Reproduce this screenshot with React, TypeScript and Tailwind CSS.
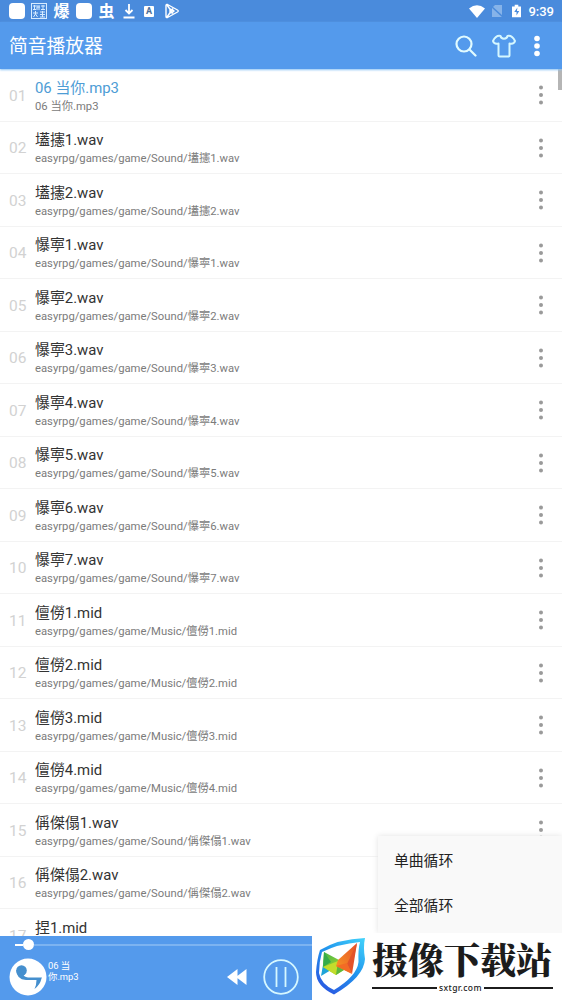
import type { ReactNode } from "react";

const tracks = [
  { title: "06 当你.mp3", path: "06 当你.mp3" },
  { title: "壒攇1.wav", folder: "Sound" },
  { title: "壒攇2.wav", folder: "Sound" },
  { title: "懪寕1.wav", folder: "Sound" },
  { title: "懪寕2.wav", folder: "Sound" },
  { title: "懪寕3.wav", folder: "Sound" },
  { title: "懪寕4.wav", folder: "Sound" },
  { title: "懪寕5.wav", folder: "Sound" },
  { title: "懪寕6.wav", folder: "Sound" },
  { title: "懪寕7.wav", folder: "Sound" },
  { title: "儃僗1.mid", folder: "Music" },
  { title: "儃僗2.mid", folder: "Music" },
  { title: "儃僗3.mid", folder: "Music" },
  { title: "儃僗4.mid", folder: "Music" },
  { title: "偁傑傝1.wav", folder: "Sound" },
  { title: "偁傑傝2.wav", folder: "Sound" },
  { title: "捏1.mid", path: "" },
];

function Dots({ className, r = 2 }: { className: string; r?: number }) {
  return (
    <svg viewBox="0 0 6 22" className={className} fill="currentColor">
      <circle cx="3" cy="3.5" r={r} />
      <circle cx="3" cy="11" r={r} />
      <circle cx="3" cy="18.5" r={r} />
    </svg>
  );
}

function StatusGlyph({ children }: { children: ReactNode }) {
  return <span className="w-[17px] text-center text-[16px] leading-[17px] font-bold">{children}</span>;
}

function StatusBar() {
  return (
    <div className="flex h-[22px] shrink-0 items-center bg-[#4a8bdc] pr-2 pl-[9px] text-white">
      <div className="flex items-center gap-[6px]">
        <span className="h-4 w-4 rounded-[4px] bg-white" />
        <svg viewBox="0 0 16 16" className="h-4 w-4" fill="none" stroke="#d6ebff" strokeWidth="1">
          <rect x="0.5" y="0.5" width="15" height="15" />
          <path d="M2 3h3M3.5 2v5M2 6.5h3M6 2v5M6 4h3M8 2v5M10 3h4M12 2v5M10 6.5h4M2 10h5M4.5 8v3l-2 3M4.5 11l2 3M9 9h5M9 11.5h5M11.5 8v6M9 14h5" />
        </svg>
        <StatusGlyph>爆</StatusGlyph>
        <span className="h-4 w-4 rounded-[4px] bg-white" />
        <StatusGlyph>虫</StatusGlyph>
        <svg viewBox="0 0 14 16" className="ml-[1px] h-4 w-[14px]" fill="none" stroke="white" strokeWidth="1.8">
          <path d="M7 1v9M3.5 7 7 10.5 10.5 7M1.5 14.5h11" />
        </svg>
        <span className="ml-[2px] flex h-[11px] w-[10px] items-center justify-center rounded-[1px] bg-white text-[9px] leading-none font-bold text-[#4a6d96]">
          A
        </span>
        <svg viewBox="0 0 16 16" className="ml-[4px] h-4 w-4" fill="none" stroke="white" strokeWidth="1.4" strokeLinejoin="round">
          <path d="M2 2.5Q2 1 3.5 1.5L13.5 7Q15 8 13.5 9L3.5 14.5Q2 15 2 13.5ZM3 2l6 8.5M3 14l6-8.5M6 6v4l4-2Z" />
        </svg>
      </div>
      <div className="ml-auto flex items-center">
        <svg viewBox="0 0 16 13" className="h-[13px] w-4" fill="white">
          <path d="M0 3.5Q8-3 16 3.5L8 13Z" />
        </svg>
        <svg viewBox="0 0 12 12" className="ml-[6px] h-3 w-3">
          <path d="M4 0h7v12H1V3Z" fill="#86b3e9" />
          <path d="M0 1 12 12" stroke="#4a8bdc" strokeWidth="1.5" />
        </svg>
        <svg viewBox="0 0 10 14" className="ml-[9px] h-[14px] w-[9px]">
          <path d="M3 0h4v2h3v12H0V2h3Z" fill="white" />
          <path d="M6 3 2.5 8H5v4l3-5H5.5Z" fill="#4a8bdc" />
        </svg>
        <span className="ml-[7px] pt-px text-[13px] leading-4 font-medium">9:39</span>
      </div>
    </div>
  );
}

function TitleBar() {
  return (
    <div className="z-10 flex h-[47px] shrink-0 items-center bg-[#549aec] pr-[22px] pl-[9px] text-white shadow-[0_1px_2px_#8bc4f5]">
      <h1 className="pt-[2px] text-[18.8px] leading-6">简音播放器</h1>
      <svg viewBox="0 0 22 22" className="ml-auto h-[22px] w-[22px]" fill="none" stroke="#e1fbff" strokeWidth="2.2" strokeLinecap="round">
        <circle cx="9" cy="9" r="7.5" />
        <path d="m14.5 14.5 6 6" />
      </svg>
      <svg viewBox="0 0 24 24" className="mr-[18px] ml-[15px] h-6 w-6" fill="none" stroke="#d5f7ff" strokeWidth="2" strokeLinejoin="round">
        <path d="M8.5 2C9 5.5 15 5.5 15.5 2Q20 1 23 7 22 10.5 17.5 9.5V21.5Q17.5 22.5 16.5 22.5H7.5Q6.5 22.5 6.5 21.5V9.5Q2 10.5 1 7 4 1 8.5 2Z" />
      </svg>
      <Dots r={2.8} className="h-[22px] w-[6px]" />
    </div>
  );
}

function TrackList() {
  return (
    <ul className="min-h-0 flex-1 overflow-hidden bg-white">
      {tracks.map((track, index) => (
        <li key={track.title} className="flex h-[52.5px] border-b border-[#f3f3f3] pr-[18px] pl-[9px]">
          <span className="w-[26px] pt-[16.5px] text-[15.5px] leading-5 text-[#d2d2d2]">
            {String(index + 1).padStart(2, "0")}
          </span>
          <div className="min-w-0 flex-1 pt-[8.9px] whitespace-nowrap">
            <p className={`text-[14.9px] leading-5 ${index === 0 ? "text-[#4d9cd5]" : "text-[#333333]"}`}>{track.title}</p>
            <p className="text-[11.28px] leading-[17px] text-[#7b7b7b]">
              {track.path ?? `easyrpg/games/game/${track.folder}/${track.title}`}
            </p>
          </div>
          <Dots className="mt-[15px] h-[22px] w-[6px] text-[#9a9a9a]" />
        </li>
      ))}
    </ul>
  );
}

function PlayerBar() {
  return (
    <footer className="h-16 shrink-0 bg-[#549aec] text-white">
      <div className="flex h-[17px] items-center pl-[15px]">
        <span className="h-[2px] w-2 bg-white" />
        <span className="h-[11px] w-[11px] rounded-full bg-white" />
        <span className="h-[2px] flex-1 bg-[#7cb3f1]" />
      </div>
      <div className="flex h-[47px] items-center pl-[9px]">
        <svg viewBox="0 0 38 38" className="h-[38px] w-[38px]">
          <circle cx="19" cy="19" r="18.5" fill="white" />
          <circle cx="12.5" cy="12.5" r="5.3" fill="#458fce" />
          <path d="M7.2 12Q7.500 21.500 17 22H27.500Q27.500 27 25.500 31Q31 27 32.500 20.500L33 19.500H19Q14.500 19 14 15.500L10 13Z" fill="#458fce" />
        </svg>
        <p className="mb-3 ml-[1px] w-9 text-[9.4px] leading-[11px]">
          06 当
          <br />
          你.mp3
        </p>
        <svg viewBox="0 0 20 18" className="ml-[143px] h-[18px] w-5" fill="white">
          <path d="M10.5 1v16L0 9ZM19.5 1v16L9 9Z" />
        </svg>
        <svg viewBox="0 0 36 36" className="ml-[16px] h-9 w-9" fill="none" stroke="#d5f7ff" strokeWidth="1.8">
          <circle cx="18" cy="18" r="16.8" />
          <path d="M13.5 8v20M22.5 8v20" />
        </svg>
      </div>
    </footer>
  );
}

function LoopMenu() {
  return (
    <div className="absolute right-0 bottom-[67px] z-10 h-[97px] w-[184px] bg-[#f9f9f9] pl-4 text-[14.8px] text-[#222222] shadow-[0_0_6px_#e2e2e2]">
      <p className="pt-[3px] leading-[45px]">单曲循环</p>
      <p className="leading-[45px]">全部循环</p>
    </div>
  );
}

function SiteBadge() {
  return (
    <div className="absolute right-0 bottom-0 z-20 flex h-[67px] w-[250px] bg-white pl-1 text-[#1c1c1c]">
      <svg viewBox="0 0 50 58" className="mt-[4px] h-[58px] w-[50px]">
        <defs>
          <linearGradient id="shield" x1="1" y1="0" x2="0.3" y2="1">
            <stop offset="0" stopColor="#43d3fb" />
            <stop offset="0.5" stopColor="#2196ed" />
            <stop offset="1" stopColor="#2a5be2" />
          </linearGradient>
          <linearGradient id="warm" x1="0" y1="1" x2="1" y2="0">
            <stop offset="0" stopColor="#f79a22" />
            <stop offset="1" stopColor="#e8502b" />
          </linearGradient>
          <linearGradient id="cool" x1="0" y1="0" x2="0.6" y2="1">
            <stop offset="0" stopColor="#3fb549" />
            <stop offset="1" stopColor="#b4d92b" />
          </linearGradient>
        </defs>
        <path
          fillRule="evenodd"
          fill="url(#shield)"
          d="M4 13Q22 2 49 1Q47 10 49 22Q48 40 18 57.5Q0 49 0 35Q1 22 4 13ZM6 15Q3 25 3 36Q5 47 18 53Q41 39 42.5 25Q42 12 44 5Q22 7 6 15Z"
        />
        <path d="M5 39 7 28 15 33Z" fill="#1fa4d8" />
        <path d="M8 15 23 23 31 31 20 38 7 30Z" fill="url(#cool)" />
        <path d="M8 15 15 25 7 30Z" fill="#35ab4b" />
        <path d="M7 30 22 24 20 38Z" fill="#c3dc2c" />
        <path d="M20 38 22 26 31 31Z" fill="#5cb83c" />
        <path d="M41 6 22 23 20 29 35 36Z" fill="url(#warm)" />
        <path d="M41 6 36 37 31 27Z" fill="#e2532b" />
        <path d="M20 29 31 26 36 37Z" fill="#f36b25" />
      </svg>
      <div className="ml-[6px] flex w-[181px] flex-col">
        <p className="mt-[3px] font-['Noto_Serif_CJK_SC','Noto_Sans_CJK_SC',serif] text-[36px] leading-[46px] font-black whitespace-nowrap">
          摄像下载站
        </p>
        <div className="-mt-px flex items-center gap-[2px] font-['Noto_Sans',sans-serif] text-[8.5px] leading-[14px] font-medium tracking-[0.4px]">
          <span className="h-[2px] w-[65px] bg-current" />
          <span>sxtgr.com</span>
          <span className="h-[2px] flex-1 bg-current" />
        </div>
      </div>
    </div>
  );
}

export default function App() {
  return (
    <main className="relative flex h-[1000px] w-[562px] flex-col overflow-hidden bg-white font-[Roboto,'Noto_Sans_CJK_SC',sans-serif]">
      <StatusBar />
      <TitleBar />
      <TrackList />
      <PlayerBar />
      <span className="absolute top-[69px] right-0 h-[21px] w-1 bg-[#b5b5b5]" />
      <LoopMenu />
      <SiteBadge />
    </main>
  );
}
